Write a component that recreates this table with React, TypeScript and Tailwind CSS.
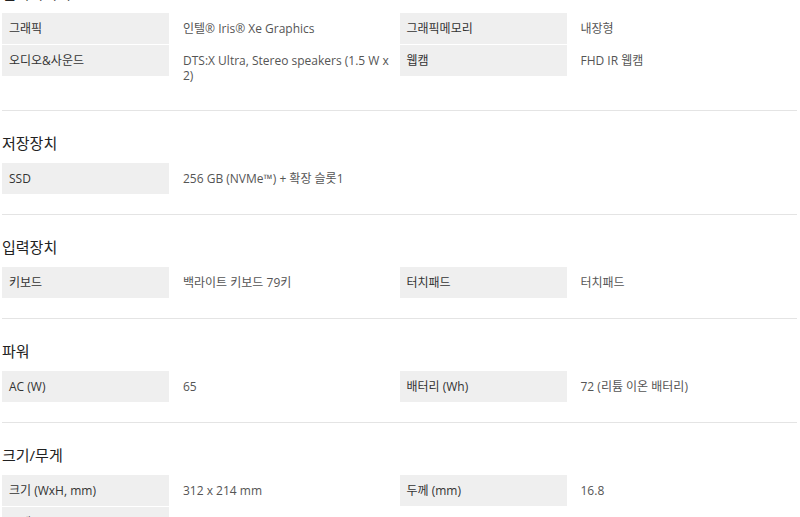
import React from "react";

type Spec = { label: string; value: string };
type Section = { title: string; rows: Spec[][] };

const sections: Section[] = [
  {
    title: "멀티미디어",
    rows: [
      [
        { label: "그래픽", value: "인텔® Iris® Xe Graphics" },
        { label: "그래픽메모리", value: "내장형" },
      ],
      [
        { label: "오디오&사운드", value: "DTS:X Ultra, Stereo speakers (1.5 W x 2)" },
        { label: "웹캠", value: "FHD IR 웹캠" },
      ],
    ],
  },
  {
    title: "저장장치",
    rows: [[{ label: "SSD", value: "256 GB (NVMe™) + 확장 슬롯1" }]],
  },
  {
    title: "입력장치",
    rows: [
      [
        { label: "키보드", value: "백라이트 키보드 79키" },
        { label: "터치패드", value: "터치패드" },
      ],
    ],
  },
  {
    title: "파워",
    rows: [
      [
        { label: "AC (W)", value: "65" },
        { label: "배터리 (Wh)", value: "72 (리튬 이온 배터리)" },
      ],
    ],
  },
  {
    title: "크기/무게",
    rows: [
      [
        { label: "크기 (WxH, mm)", value: "312 x 214 mm" },
        { label: "두께 (mm)", value: "16.8" },
      ],
      [{ label: "무게 (kg)", value: "1.35" }],
    ],
  },
];

function SpecCell({ spec }: { spec: Spec }) {
  return (
    <div className="flex items-start">
      <div className="w-[167px] shrink-0 h-[31px] bg-[#efefef] pl-[7px] flex items-center text-[#333]">
        {spec.label}
      </div>
      <div className="flex-1 pl-[14px] pr-[8px] py-[8px] leading-[15px] text-[#555]">{spec.value}</div>
    </div>
  );
}

export default function App() {
  return (
    <main
      className="w-[800px] h-[517px] overflow-hidden bg-white text-[12px]"
      style={{ fontFamily: '"Open Sans", "Noto Sans CJK KR", sans-serif' }}
    >
      <div className="pl-[2px] pr-[3px]">
        {sections.map((s, i) => (
          <section
            key={s.title}
            className={`border-b border-[#e4e4e4] ${i === 0 ? "-mt-[19px] pb-[19px]" : "pt-[20px] pb-[20px]"}`}
          >
            <h2 className="text-[15px] leading-[24px] mb-[8px] text-[#222]">{s.title}</h2>
            <div className="flex flex-col gap-px">
              {s.rows.map((row, j) => (
                <div key={j} className="grid grid-cols-2">
                  {row.map((spec) => (
                    <SpecCell key={spec.label} spec={spec} />
                  ))}
                </div>
              ))}
            </div>
          </section>
        ))}
      </div>
    </main>
  );
}
